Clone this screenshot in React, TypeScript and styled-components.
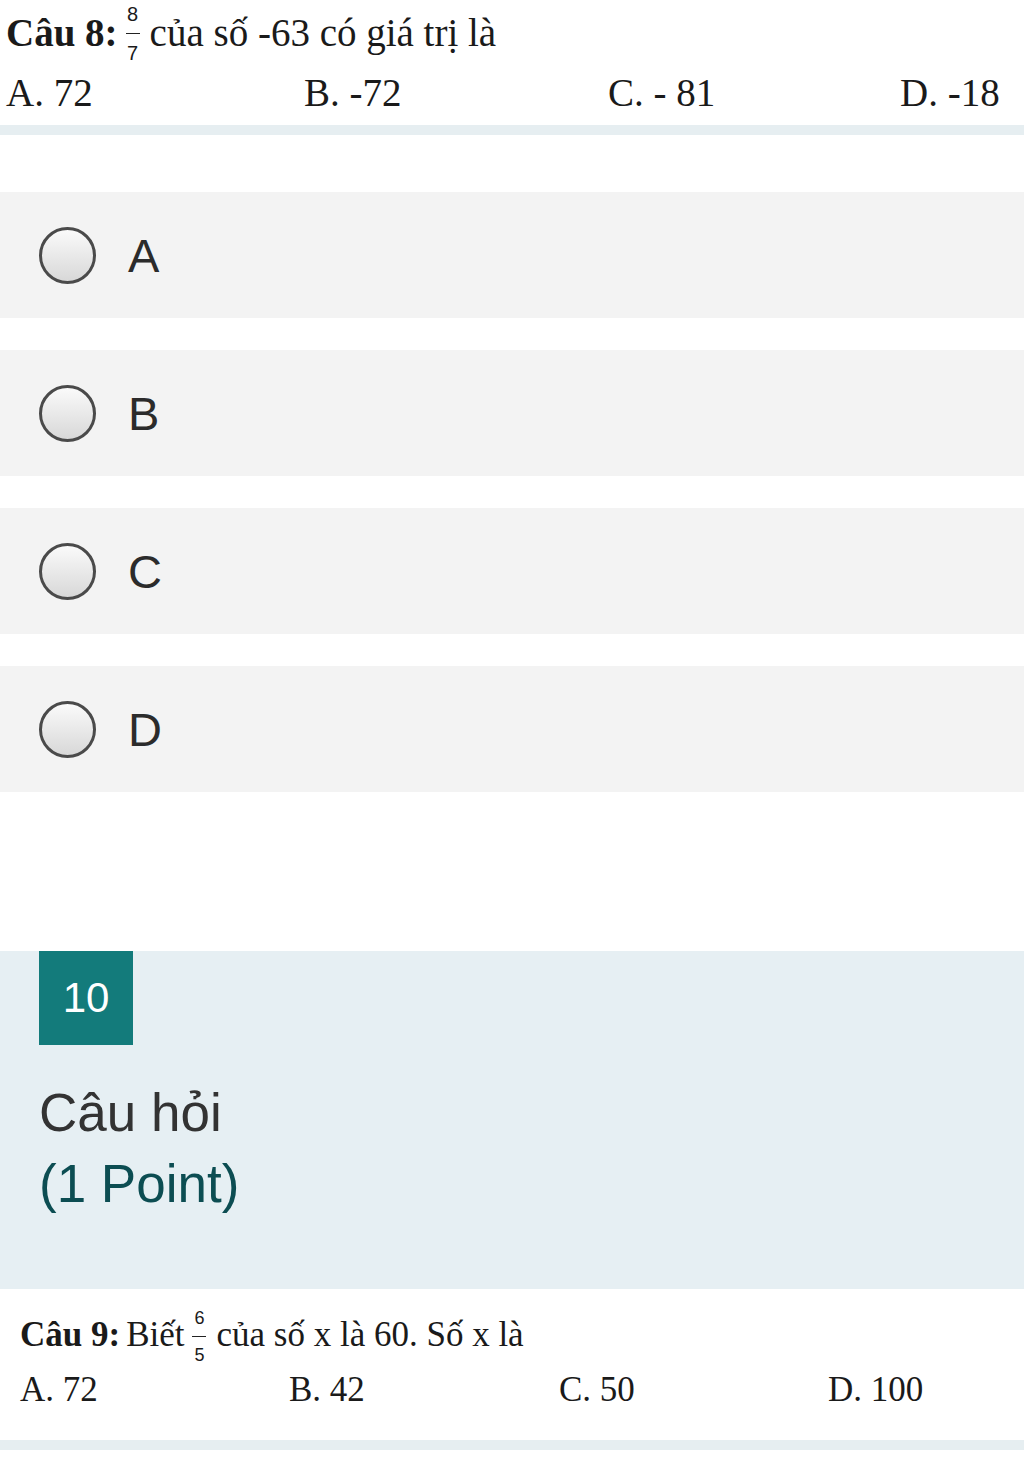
import React from 'react'
import styled, { createGlobalStyle } from 'styled-components'

const GlobalStyle = createGlobalStyle`
  html, body {
    margin: 0;
    padding: 0;
    background: #ffffff;
  }
  body {
    font-family: 'Liberation Sans', Arial, sans-serif;
  }
`

const Page = styled.div`
  width: 1024px;
  display: flex;
  flex-direction: column;
`

const Figure = styled.div<{ $pad: number; $size: number; $height: number }>`
  height: ${(p) => p.$height}px;
  padding: 0 ${(p) => p.$pad}px;
  font-family: 'Liberation Serif', 'Times New Roman', serif;
  font-size: ${(p) => p.$size}px;
  color: #1a1a1a;
  display: flex;
  flex-direction: column;
  border-bottom: 10px solid #e6eef1;
`

const Stem = styled.div<{ $top: number }>`
  height: 64px;
  display: flex;
  align-items: center;
  white-space: pre;
  margin-top: ${(p) => p.$top}px;
`

const Bold = styled.b`
  font-weight: 700;
  margin-right: 6px;
`

const Frac = styled.span<{ $size: number; $gap: number; $ml: number; $mr: number }>`
  display: inline-flex;
  flex-direction: column;
  align-items: center;
  font-family: 'Liberation Sans', Arial, sans-serif;
  font-size: ${(p) => p.$size}px;
  line-height: 1;
  margin: 2px ${(p) => p.$mr}px 0 ${(p) => p.$ml}px;
  & > i {
    font-style: normal;
  }
  & > hr {
    width: 14px;
    margin: ${(p) => p.$gap}px 0;
    border: 0;
    border-top: 1.5px solid #222;
  }
`

const Choices = styled.div<{ $cols: string; $height: number }>`
  height: ${(p) => p.$height}px;
  display: grid;
  grid-template-columns: ${(p) => p.$cols};
  align-items: center;
  white-space: pre;
`

const Spacer = styled.div<{ $h: number }>`
  height: ${(p) => p.$h}px;
`

const Options = styled.div`
  display: flex;
  flex-direction: column;
  gap: 32px;
`

const Option = styled.label`
  height: 126px;
  background: #f3f3f3;
  display: flex;
  align-items: center;
  padding-left: 39px;
  gap: 32px;
  font-size: 47px;
  color: #2b2b2b;
`

const Radio = styled.span`
  width: 51px;
  height: 51px;
  border-radius: 50%;
  border: 3px solid #4a4a4a;
  background: linear-gradient(#fafafa, #d8d8d8);
  flex: none;
`

const Header = styled.div`
  background: #e6eff3;
  height: 338px;
  padding-left: 39px;
  display: flex;
  flex-direction: column;
`

const Badge = styled.div`
  width: 94px;
  height: 94px;
  background: #137b7b;
  color: #ffffff;
  font-size: 42px;
  display: flex;
  align-items: center;
  justify-content: center;
`

const Title = styled.div`
  margin-top: 32px;
  font-size: 53px;
  line-height: 71px;
  color: #333333;
`

const Points = styled.div`
  font-size: 53px;
  line-height: 71px;
  color: #0c4d52;
`

const App: React.FC = () => {
  return (
    <Page>
      <GlobalStyle />
      <Figure $pad={6} $size={39} $height={125}>
        <Stem $top={0}>
          <Bold>Câu 8:</Bold>
          <Frac $size={20} $gap={9} $ml={2} $mr={10}>
            <i>8</i>
            <hr />
            <i>7</i>
          </Frac>
          của số -63 có giá trị là
        </Stem>
        <Choices $cols="298px 304px 292px auto" $height={56}>
          <span>A. 72</span>
          <span>B. -72</span>
          <span>C. - 81</span>
          <span>D. -18</span>
        </Choices>
      </Figure>
      <Spacer $h={57} />
      <Options>
        {['A', 'B', 'C', 'D'].map((l) => (
          <Option key={l}>
            <Radio />
            {l}
          </Option>
        ))}
      </Options>
      <Spacer $h={159} />
      <Header>
        <Badge>10</Badge>
        <Title>Câu hỏi</Title>
        <Points>(1 Point)</Points>
      </Header>
      <Figure $pad={20} $size={35} $height={151}>
        <Stem $top={14}>
          <Bold>Câu 9:</Bold>
          Biết
          <Frac $size={18} $gap={9} $ml={8} $mr={10}>
            <i>6</i>
            <hr />
            <i>5</i>
          </Frac>
          của số x là 60. Số x là
        </Stem>
        <Choices $cols="269px 270px 269px auto" $height={46}>
          <span>A. 72</span>
          <span>B. 42</span>
          <span>C. 50</span>
          <span>D. 100</span>
        </Choices>
      </Figure>
    </Page>
  )
}

export default App
